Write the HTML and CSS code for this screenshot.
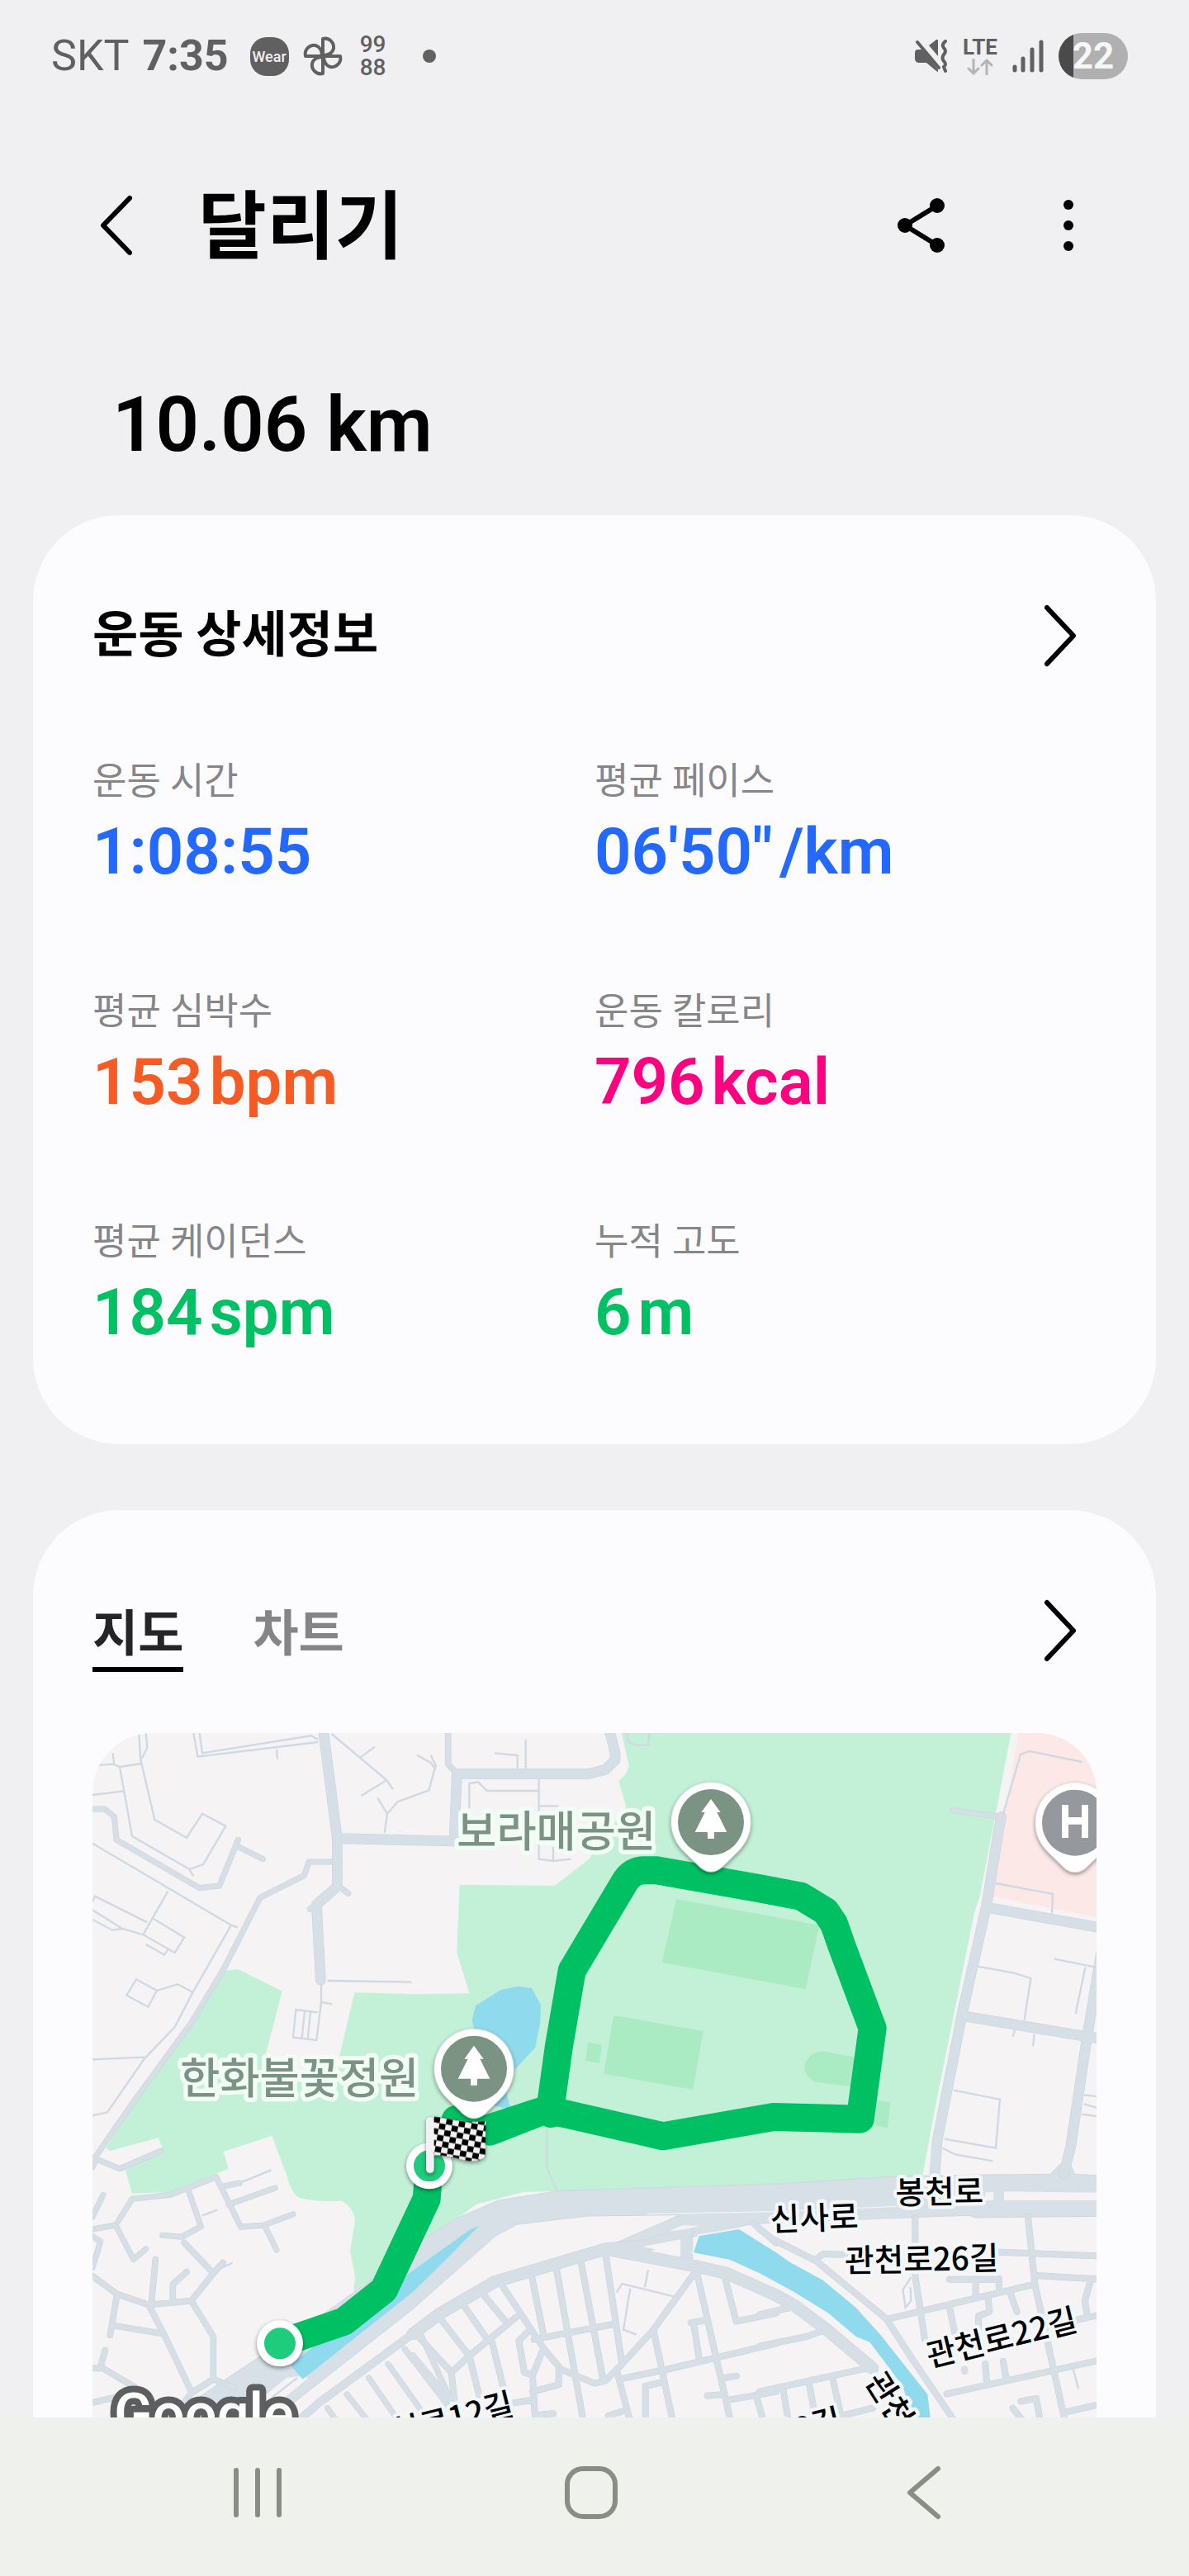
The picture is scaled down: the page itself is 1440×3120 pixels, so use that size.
FILE: index.html
```html
<!DOCTYPE html>
<html lang="ko">

<head>
    <meta charset="UTF-8">
    <meta name="viewport" content="width=device-width, initial-scale=1.0">
    <title>달리기</title>
    <link rel="stylesheet" href="styles.css">
</head>

<body>
    <div class="status-bar">
        <div class="status-left">
            <span class="carrier">SKT</span>
            <span class="clock">7:35</span>
            <div class="status-icons">
                <span class="wear-badge">Wear</span>
                <svg class="icon-fan" viewBox="0 0 50 50">
                    <path d="M25 24V4C33 2 39 9 38 16C37 20 33 24 25 24ZM26 25H46C48 33 41 39 34 38C30 37 26 33 26 25ZM25 26V46C17 48 11 41 12 34C13 30 17 26 25 26ZM24 25H4C2 17 9 11 16 12C20 13 24 17 24 25Z" />
                </svg>
                <span class="digits-badge"><span>99</span><span>88</span></span>
                <span class="more-dot"></span>
            </div>
        </div>
        <div class="status-right">
            <svg class="icon-mute" viewBox="0 0 40 40">
                <path class="fill" d="M4 12H9L28 36V39L26 38L14 28H4Q0 27 0 23V16Q0 12 4 12ZM28 0V20L17 7L26 0Z" />
                <path class="line" d="M3 3L29 34M37 2Q32 6 35 10Q39 14 35 18Q32 22 35 26Q39 30 35 33L37 38" />
            </svg>
            <span class="lte">
                <span>LTE</span>
                <svg viewBox="0 0 32 20">
                    <path d="M8 1V18M2 12L8 18L14 12M24 19V2M18 8L24 2L30 8" />
                </svg>
            </span>
            <svg class="icon-signal" viewBox="0 0 38 40">
                <path d="M3 33V37M13 23V37M24 12V37M35 3V37" />
            </svg>
            <span class="battery">22</span>
        </div>
    </div>

    <header>
        <button class="icon-button" aria-label="뒤로">
            <svg viewBox="0 0 88 88">
                <path d="M61 11L29 44L61 77" />
            </svg>
        </button>
        <h1>달리기</h1>
        <button class="icon-button" aria-label="공유">
            <svg viewBox="0 0 88 88">
                <path d="M63 20L24 44L63 68" />
                <circle cx="63" cy="20" r="9" />
                <circle cx="24" cy="44" r="9" />
                <circle cx="63" cy="68" r="9" />
            </svg>
        </button>
        <button class="icon-button" aria-label="더보기">
            <svg viewBox="0 0 88 88">
                <circle cx="44" cy="19" r="6" />
                <circle cx="44" cy="44" r="6" />
                <circle cx="44" cy="69" r="6" />
            </svg>
        </button>
    </header>

    <main>
        <p class="distance">10.06 km</p>

        <section class="card">
            <div class="card-head">
                <h2>운동 상세정보</h2>
                <button class="icon-button" aria-label="상세정보 열기">
                    <svg viewBox="0 0 88 88">
                        <path d="M28 10L60 44L28 78" />
                    </svg>
                </button>
            </div>
            <dl class="stats">
                <div class="stat blue">
                    <dt>운동 시간</dt>
                    <dd>1:08:55</dd>
                </div>
                <div class="stat blue">
                    <dt>평균 페이스</dt>
                    <dd>06'50" <span>/km</span></dd>
                </div>
                <div class="stat orange">
                    <dt>평균 심박수</dt>
                    <dd>153 <span>bpm</span></dd>
                </div>
                <div class="stat pink">
                    <dt>운동 칼로리</dt>
                    <dd>796 <span>kcal</span></dd>
                </div>
                <div class="stat green">
                    <dt>평균 케이던스</dt>
                    <dd>184 <span>spm</span></dd>
                </div>
                <div class="stat green">
                    <dt>누적 고도</dt>
                    <dd>6 <span>m</span></dd>
                </div>
            </dl>
        </section>

        <section class="card">
            <div class="card-head">
                <div class="tabs">
                    <button class="tab active">지도</button>
                    <button class="tab">차트</button>
                </div>
                <button class="icon-button" aria-label="지도 열기">
                    <svg viewBox="0 0 88 88">
                        <path d="M28 10L60 44L28 78" />
                    </svg>
                </button>
            </div>

            <svg class="map" viewBox="36 57 3648 3000" preserveAspectRatio="xMidYMin slice">
                <defs>
                    <g id="streets">
                        <g>
                            <path class="w38" d="M875 50L925 440V615L850 680L865 955M930 440L1350 450" />
                            <path class="w20" d="M36 333H80L115 360L123 445L425 620L497 612L565 445M565 470L655 515M915 525H822L805 575L645 655L515 910L395 1110L190 1390L45 1600L36 1620M940 620L965 640M850 680L825 697" />
                        </g>
                        <g transform="translate(1200 0)">
                            <path class="w22" d="M128 50V170L160 205" />
                            <path class="w38" d="M160 205H640L700 190L735 155L735 130L715 50M160 205L150 450" />
                        </g>
                        <g transform="translate(2460 0)">
                            <path class="w38" d="M878 362L870 400L825 680L735 1080L700 1260L645 1540L635 1680M835 692L1240 765M740 1085L1190 1160L1240 1168M1240 860L1190 1160L1130 1560L1105 1660" />
                            <path class="w20" d="M703 338L880 362" />
                        </g>
                        <g transform="translate(0 1260)">
                            <path class="w20" d="M36 375L50 345L135 380L285 315M36 600L120 585L180 490L320 475L485 410L575 592L660 585L765 545M660 585L705 675M505 445L570 432M530 510L700 450M385 460L430 590L360 628L290 622M120 585L185 710L230 672M36 555L75 475M36 625L65 645L36 740" />
                            <path class="w22" d="M36 770L125 835L240 875L395 860L475 760L370 650M475 760L510 722M250 870L265 710M328 860V800L378 755M125 840L100 985M115 950L295 980M240 875L295 980L395 1190M395 860L475 990V1145L395 1195L330 1284M475 1145L550 1175M82 1040L65 1100L200 1180M65 1105H36M36 1230L140 1205" />
                            <path class="w20" d="M1230 985L1335 1215M1170 1035L1350 1270M1110 1090L1260 1300M1040 1140L1150 1300M960 1200L1040 1300M890 1250L925 1300" />
                            <path class="w28" d="M1200 980L860 1230L780 1300" />
                        </g>
                        <g transform="translate(1200 1260)">
                            <path class="w45" d="M1000 610L850 660L700 672L300 790L100 905L0 980M700 672L1030 735L1140 760L1320 840L1390 880L1510 970L1670 1105M995 640V715" />
                            <path class="w24" d="M20 990L140 1120M100 925L205 1060M180 870L270 1000M250 830L345 945M315 790L480 1040L540 1110L660 1160L700 1150L760 1090L870 970L1030 750M430 760L475 985M520 735L620 1300M610 715L690 1140M700 690L760 1090M440 1000L730 945M375 920L205 1060L140 1120L150 1215M0 1060L130 1215M205 1060L240 1200M285 1000L330 1180M415 975L385 1005L405 1120L435 1130L470 1045M435 1130L445 1300M435 1190L530 1165V1110M370 1230L440 1220M740 1110L790 1300M750 1145L920 1110L1320 1015M875 970L945 1300M1030 750L1155 1300M1010 940L1065 930M1020 940L1040 1070M1135 780L1175 935L1320 905M1130 1140L1175 1133M1070 1205L1130 1200M1150 1220L1320 1190M1250 1215L1275 1300M845 1300V1170L910 1155M710 1278L760 1262M450 1275L510 1270M1240 580L1320 650" />
                        </g>
                        <g transform="translate(2460 1260)">
                            <path class="w24" d="M0 600L45 635L205 715L460 925L560 1080L710 1300M205 710L230 690L320 692M470 925L1000 800M565 560V770L600 1000M975 555L1000 800L1110 1300M870 683L1240 697M1000 768L1240 782M690 782H870M785 780V845M870 780V820M830 850L835 900L795 915V960M910 830L935 900M690 885L710 980M1200 795L1182 860L1190 915M1150 930L1240 910M0 910L110 885M0 1025L170 990L240 965M0 1190L390 1105M85 1180L105 1300M180 1160L205 1300M265 1140L300 1300M310 1275L410 1250M680 1198L1240 1075M820 1090L825 1155M885 1080L895 1140M1110 1265L1240 1235M950 1225L1005 1215L1020 1300M920 1250L960 1300M745 1110V1115" />
                        </g>
                    </g>

                    <g id="pin">
                        <path d="M-145 0A145 145 0 1 1 145 0C145 45 125 80 98 108L38 166Q0 196 -38 166L-98 108C-125 80 -145 45 -145 0Z" />
                    </g>
                    <path id="tree" d="M0 -84L35 -36H22L58 36H12V60H-12V36H-58L-22 -36H-35Z" />
                    <pattern id="checker" width="46" height="42" patternUnits="userSpaceOnUse" patternTransform="translate(1278 1450) rotate(10)">
                        <rect class="check-light" width="46" height="42" />
                        <rect class="check-dark" width="23" height="21" />
                        <rect class="check-dark" x="23" y="21" width="23" height="21" />
                    </pattern>
                </defs>

                <rect class="land" x="36" y="57" width="3648" height="3000" />

                <!-- hospital block and parks -->
                <path class="hospital" d="M3400 57H3700V730L3305 650L3350 360Z" />
                <path class="park" d="M1957 50L1985 175L1975 205L1948 232L1975 325L1840 515L1715 612L1370 608L1360 855L1405 1003L1200 1006L988 1000L935 1225L930 1290H660L668 1215L725 995L565 915L515 920L400 1110L200 1385L85 1565L100 1575L275 1528L290 1565L155 1645L180 1730L320 1725L530 1640L512 1578L688 1520L740 1660Q760 1735 790 1747Q860 1762 940 1757Q985 1780 990 1830L972 1940L990 2030L985 2085L1060 2035L1200 1920L1360 1820L1430 1770L1600 1725L2520 1695L3052 1665L3105 1380L3240 710L3260 650L3375 50Z" />
                <path class="field" d="M2158 660L2677 755L2627 988L2105 890ZM1930 1083L2255 1140L2218 1353L1893 1295ZM1837 1180L1887 1190L1878 1257L1827 1247ZM2700 1215L2830 1240L2800 1342L2665 1325Q2620 1305 2623 1265Q2640 1210 2700 1215ZM2885 1390L2935 1400L2925 1492L2870 1482Z" />
                <path class="pond" d="M1428 1048L1520 990L1585 977L1632 985L1665 1045L1663 1110L1645 1200L1570 1280L1530 1330L1556 1425L1490 1410L1415 1100Z" />

                <!-- boulevard -->
                <path class="avenue" d="M1200 1920L1360 1820L1510 1755L1730 1720L2520 1695L2960 1668L3260 1662L3515 1660L3550 1625H3590L3605 1660L3700 1665V1813L3245 1818L3220 1810L2805 1825L2440 1840L2240 1882L2030 1945L1890 1930L2170 1808L1840 1812L1580 1842L1500 1885L1200 2150L700 2544L640 2600H270L350 2520L490 2425L880 2165L1060 2035Z" />
                <path class="land" d="M3280 1726L3310 1725V1755H3280ZM3348 1723L3700 1727V1755H3348ZM780 2395L820 2400L640 2550H560L740 2400Z" />
                <path class="divider" d="M2050 1805L2520 1796L2960 1777" />

                <use class="case" href="#streets" />
                <use class="body" href="#streets" />
                <path class="land" d="M2035 1923L2173 1897V1955ZM2130 1868L2180 1845L2240 1848L2190 1860Z" />

                <g class="lanes">
                    <path d="M36 175L110 170L135 180L215 168M110 130L115 170M135 180L180 432L388 552L438 535L520 395L435 350L378 438L262 372L210 150L205 57M388 552L403 577M215 150L235 110L230 57M36 282L148 268M403 57L418 143L855 90M425 57L435 130L830 67L855 80M705 115L708 152M36 458L540 755L563 763M540 755L400 1000L335 1125L225 1240L90 1435L36 1447M36 1243L225 1235M310 632L220 790L145 768L108 773L36 735M36 700L145 768M36 670L45 650L235 745M258 732L370 800L335 855L220 790M230 825L297 863L310 845M195 952L270 993L238 1052L160 1010ZM270 993L345 970L400 998M890 957L1195 962M867 970V1035L907 1042M867 1035L850 1173L765 1163L775 1062L855 1072M807 1068L797 1165M828 1070L818 1170M905 60L1105 228L1128 262M1062 107L1010 145M1105 228L1012 285M1072 293L1107 350L1097 420M1107 350L1145 307L1258 265L1283 175L1265 137M1215 137L1265 165L1283 190" />
                    <path transform="translate(1200 0)" d="M410 80V185M297 130L380 138V185M205 330V240L237 235L270 267H460M458 225V515L510 522L575 515M510 470V522M458 322H530M775 57L785 90L820 102L855 100L860 57" />
                    <path transform="translate(2460 0)" d="M1172 162L980 123L948 135L885 350M858 603L1065 642L1062 712M1070 878L1230 910M1183 908L1148 1078M790 905L920 928L985 948L962 1100M927 1135L920 1160M998 1150L993 1195M705 1355L873 1388L858 1565L672 1532M665 1565L710 1588L847 1612M1178 1372L1230 1378M1178 1405L1230 1420M1170 1442L1230 1450" />
                    <path transform="translate(0 1260)" d="M575 430L685 385M435 550L490 530M505 740L545 722M690 1210L780 1140" />
                    <path transform="translate(1200 1260)" d="M740 830L760 798L950 845M855 748L843 810M790 815L765 965L812 983M487 200V375L523 460" />
                    <path transform="translate(2460 1260)" d="M550 775L520 820L530 885L550 860L548 810M1140 1110L1158 1180" />
                </g>

                <!-- stream -->
                <path class="water" d="M760 2360L800 2405L1200 2088L1320 1970L1440 1848L1410 1860L1200 2010L1050 2120L760 2350Z" />
                <path class="stream-bank" d="M2240 1885L2385 1860L2520 1945L2570 1980L2690 2045L2810 2145L2900 2245L3070 2460L3082 2560H3020L2980 2430L2860 2270L2810 2250L2710 2165L2580 2085L2460 2020L2350 1970L2220 1945Z" />

                <path class="route" d="M717 2275L950 2195L1095 2080L1250 1750L1260 1630M1355 1462L1450 1502L1680 1427M1700 1440L1705 1380L1730 1200L1778 920L1975 590Q2000 557 2040 556H2085L2460 622L2610 650L2700 705L2730 750L2760 835L2870 1130L2825 1460L2510 1452L2110 1522L1750 1440L1680 1427L1480 1505" />

                <g class="shadow">
                    <circle class="white" cx="717" cy="2275" r="84" />
                    <circle class="white" cx="1260" cy="1630" r="84" />
                </g>
                <circle class="dot" cx="717" cy="2275" r="57" />
                <circle class="dot" cx="1260" cy="1630" r="57" />

                <g class="shadow">
                    <use class="white" href="#pin" x="2283" y="381" />
                    <use class="white" href="#pin" x="1422" y="1277" />
                    <use class="white" href="#pin" x="3606" y="383" />
                </g>
                <circle class="pin-park" cx="2283" cy="381" r="120" />
                <circle class="pin-park" cx="1422" cy="1277" r="120" />
                <circle class="pin-hospital" cx="3606" cy="383" r="120" />
                <use class="white" href="#tree" x="2283" y="381" />
                <use class="white" href="#tree" x="1422" y="1277" />
                <path class="white" d="M3558 318H3582V363H3630V318H3654V438H3630V389H3582V438H3558Z" />

                <g class="shadow">
                    <path fill="url(#checker)" d="M1273 1450Q1320 1455 1365 1465Q1415 1475 1465 1467L1463 1595Q1440 1620 1385 1608Q1330 1590 1276 1590Z" />
                    <rect class="pole" x="1248" y="1453" width="29" height="203" rx="14" />
                </g>

                <g class="place">
                    <text x="1360" y="472">보라매공원</text>
                    <text x="355" y="1368">한화불꽃정원</text>
                </g>
                <g class="road-name">
                    <text transform="translate(2954 1769) rotate(-1)">봉천로</text>
                    <text transform="translate(2500 1867) rotate(-2)">신사로</text>
                    <text transform="translate(2770 2016) rotate(-1)">관천로26길</text>
                    <text transform="translate(3078 2362) rotate(-14)">관천로22길</text>
                    <text transform="translate(2841 2412) rotate(58)">관천로</text>
                    <text transform="translate(1572 2533) rotate(-14)" text-anchor="end">관천로12길</text>
                    <text transform="translate(2764 2590) rotate(-14)" text-anchor="end">관천로18길</text>
                </g>
                <text class="watermark" x="114" y="2602">Google</text>
            </svg>
        </section>
    </main>

    <nav>
        <button class="nav-button" aria-label="최근 앱">
            <svg viewBox="0 0 88 88">
                <path d="M17 17V71M43 17V71M69 17V71" />
            </svg>
        </button>
        <button class="nav-button" aria-label="홈">
            <svg viewBox="0 0 88 88">
                <rect x="15" y="15" width="58" height="58" rx="19" />
            </svg>
        </button>
        <button class="nav-button" aria-label="뒤로">
            <svg viewBox="0 0 88 88">
                <path d="M61 15L27 44L61 73" />
            </svg>
        </button>
    </nav>
</body>

</html>
```

FILE: styles.css
```css
* {
    box-sizing: border-box;
    margin: 0;
    padding: 0;
}

body {
    height: 100vh;
    display: flex;
    flex-direction: column;
    overflow: hidden;
    font-family: Roboto, "Noto Sans CJK KR", sans-serif;
    background-color: #f0f0f2;
    color: #000;
}

button {
    border: none;
    background: none;
    font: inherit;
    cursor: pointer;
}

svg {
    display: block;
}

/* status bar */
.status-bar {
    flex: none;
    height: 136px;
    padding: 0 74px 0 62px;
    display: flex;
    justify-content: space-between;
    align-items: center;
    color: #606060;
}

.status-left,
.status-right,
.status-icons {
    display: flex;
    align-items: center;
}

.status-left {
    gap: 16px;
    font-size: 52px;
    line-height: 60px;
}

.clock {
    font-weight: 700;
}

.status-icons {
    gap: 16px;
    margin-left: 10px;
}

.wear-badge {
    width: 47px;
    height: 47px;
    border-radius: 20px;
    background-color: #606060;
    color: #f0f0f2;
    font-size: 18px;
    font-weight: 500;
    line-height: 47px;
    text-align: center;
}

.icon-fan {
    width: 50px;
    height: 50px;
    fill: none;
    stroke: #606060;
    stroke-width: 4;
    stroke-linejoin: round;
}

.digits-badge {
    display: flex;
    flex-direction: column;
    margin-left: 4px;
    font-size: 28px;
    font-weight: 500;
    line-height: 28px;
}

.more-dot {
    width: 16px;
    height: 16px;
    margin-left: 28px;
    border-radius: 50%;
    background-color: #606060;
}

.status-right {
    gap: 18px;
}

.icon-mute {
    width: 40px;
    height: 40px;
}

.icon-mute .fill {
    fill: #606060;
}

.icon-mute .line {
    fill: none;
    stroke: #606060;
    stroke-width: 4;
    stroke-linecap: round;
}

.lte {
    display: flex;
    flex-direction: column;
    align-items: center;
    gap: 2px;
    font-size: 26px;
    font-weight: 700;
    line-height: 24px;
}

.lte svg {
    width: 32px;
    height: 20px;
    fill: none;
    stroke: #b4b4b4;
    stroke-width: 3;
    stroke-linecap: round;
}

.icon-signal {
    width: 38px;
    height: 40px;
    fill: none;
    stroke: #606060;
    stroke-width: 5;
    stroke-linecap: round;
}

.battery {
    width: 84px;
    height: 56px;
    border-radius: 28px;
    background: linear-gradient(to right, #4a4a4a 18px, #b0b0b0 18px);
    color: #f7f7f7;
    font-size: 44px;
    font-weight: 700;
    line-height: 56px;
    text-align: center;
}

/* title bar */
header {
    flex: none;
    height: 274px;
    padding: 0 102px 0 96px;
    display: flex;
    align-items: center;
}

h1 {
    flex: 1;
    margin-left: 56px;
    padding-top: 6px;
    font-size: 90px;
    font-weight: 700;
    line-height: 120px;
}

header .icon-button + .icon-button {
    margin-left: 90px;
}

.icon-button {
    width: 88px;
    height: 88px;
}

.icon-button path {
    fill: none;
    stroke: #000;
    stroke-width: 6;
    stroke-linecap: round;
    stroke-linejoin: round;
}

main {
    flex: 1;
    min-height: 0;
    overflow: hidden;
    padding: 0 40px;
}

.distance {
    padding: 50px 96px 54px;
    font-size: 92px;
    font-weight: 600;
    line-height: 110px;
}

/* cards */
.card {
    margin-bottom: 80px;
    padding: 96px 72px 104px;
    border-radius: 104px;
    background-color: #fcfcfe;
}

.card-head {
    height: 100px;
    display: flex;
    justify-content: space-between;
    align-items: center;
}

h2 {
    font-size: 60px;
    font-weight: 700;
    line-height: 80px;
}

.stats {
    margin-top: 97px;
    display: grid;
    grid-template-columns: 1fr 1fr;
    row-gap: 109px;
}

.stat dt {
    color: #868688;
    font-size: 45px;
    line-height: 60px;
}

.stat dd {
    display: flex;
    gap: 8px;
    font-size: 78px;
    font-weight: 600;
    line-height: 110px;
}

.blue {
    color: #2469ff;
}

.orange {
    color: #f55b23;
}

.pink {
    color: #ff0080;
}

.green {
    color: #00c064;
}

.tabs {
    align-self: stretch;
    display: flex;
    gap: 84px;
}

.tab {
    padding-top: 16px;
    border-bottom: 6px solid transparent;
    color: #858588;
    font-size: 60px;
    font-weight: 700;
    line-height: 78px;
}

.tab.active {
    border-color: #000;
    color: #252527;
}

/* map */
.map {
    width: 100%;
    margin-top: 74px;
    border-radius: 72px;
}

.land {
    fill: #f5f3f4;
}

.hospital {
    fill: #fce8e7;
}

.park {
    fill: #c3f1d7;
}

.field {
    fill: #aaebc4;
}

.pond,
.water,
.stream-bank {
    fill: #90daee;
}

.stream-bank {
    stroke: #f5f3f4;
    stroke-width: 12;
    paint-order: stroke;
}

.avenue {
    fill: #d7dfe7;
    stroke: #c6d0da;
    stroke-width: 2;
}

.divider {
    fill: none;
    stroke: #f5f3f4;
    stroke-width: 4;
}

#streets path {
    fill: none;
    stroke-linecap: round;
    stroke-linejoin: round;
}

.case {
    --case: 3px;
    stroke: #c6d2da;
}

.body {
    --case: 0px;
    stroke: #d6dfe6;
}

.w20 {
    stroke-width: calc(18px + var(--case));
}

.w22 {
    stroke-width: calc(20px + var(--case));
}

.w24 {
    stroke-width: calc(21px + var(--case));
}

.w28 {
    stroke-width: calc(26px + var(--case));
}

.w38 {
    stroke-width: calc(35px + var(--case));
}

.w45 {
    stroke-width: calc(42px + var(--case));
}

.lanes path {
    fill: none;
    stroke: #cfd9e3;
    stroke-width: 7;
}

.route {
    fill: none;
    stroke: #00c064;
    stroke-width: 102;
    stroke-linejoin: round;
    stroke-linecap: round;
}

.shadow {
    filter: drop-shadow(0 6px 8px rgba(0, 0, 0, 0.45));
}

.white {
    fill: #fff;
}

.dot {
    fill: #1fcc7b;
}

.pin-park {
    fill: #7b9383;
}

.pin-hospital {
    fill: #95989d;
}

.pole,
.check-light {
    fill: #f3f1f3;
}

.check-dark {
    fill: #000;
}

.place text,
.road-name text {
    font-family: "Noto Sans CJK KR", sans-serif;
    font-weight: 500;
    paint-order: stroke;
    stroke-linejoin: round;
}

.place text {
    font-size: 157px;
    fill: #7b9383;
    stroke: #f2fdf6;
    stroke-width: 32px;
}

.road-name text {
    font-size: 116px;
    fill: #000;
    stroke: #f3f7fa;
    stroke-width: 26px;
}

.watermark {
    font-size: 206px;
    font-weight: 500;
    fill: #fff;
    stroke: #5c5e60;
    stroke-width: 48px;
    stroke-linejoin: round;
    paint-order: stroke;
}

/* system navigation */
nav {
    flex: none;
    height: 192px;
    padding: 0 8px 10px 0;
    display: flex;
    justify-content: center;
    align-items: center;
    gap: 315px;
    background-color: #eff1ec;
}

.nav-button {
    width: 88px;
    height: 88px;
}

.nav-button path,
.nav-button rect {
    fill: none;
    stroke: #8a8c86;
    stroke-width: 6;
    stroke-linecap: round;
    stroke-linejoin: round;
}
```
